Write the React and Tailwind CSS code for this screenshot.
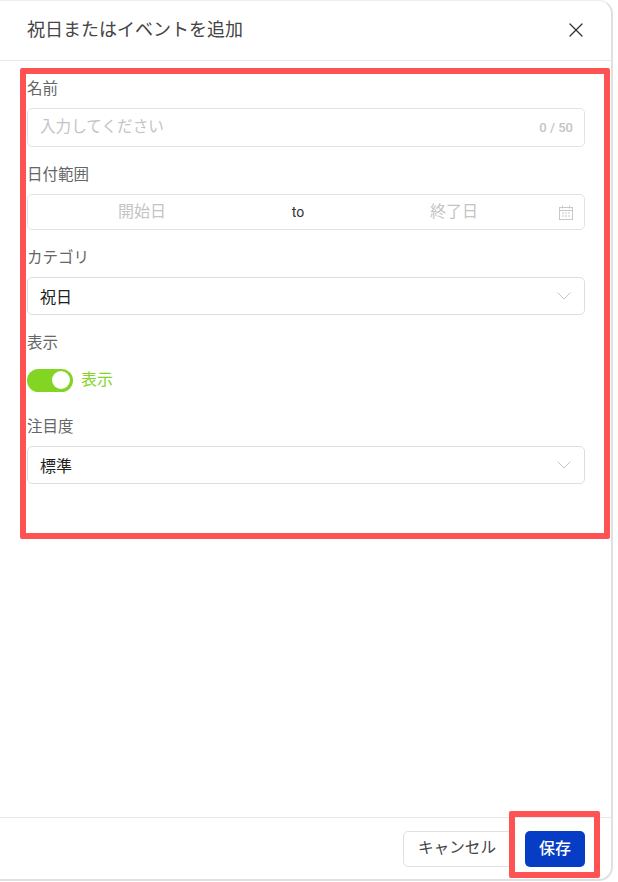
import { X } from "lucide-react";

const font = { fontFamily: '"Roboto", "Noto Sans CJK JP", sans-serif' };

function Label({ children, className = "" }) {
  return <div className={`h-5 text-[15.5px] leading-[22px] text-[#666] ${className}`}>{children}</div>;
}

function CalendarIcon() {
  return (
    <svg width="14" height="15" viewBox="0 0 14 15" fill="none" stroke="#c8c8c8" strokeWidth="1">
      <rect x="0.5" y="2.5" width="13" height="12" />
      <path d="M0.5 5.5h13M3.5 0.5v3M10.5 0.5v3" />
      <path d="M3 8h2M6 8h2M9 8h2M3 11h2M6 11h2M9 11h2" />
    </svg>
  );
}

function Chevron() {
  return (
    <svg width="14" height="8" viewBox="0 0 14 8" fill="none" stroke="#c4c4c4" strokeWidth="1">
      <path d="M0.5 0.5L7 7L13.5 0.5" />
    </svg>
  );
}

function SelectField({ value }) {
  return (
    <div className="flex h-[38px] items-center justify-between rounded-[5px] border border-[#dedede] bg-white pl-3 pr-[13px]">
      <span className="pt-[4px] text-[16px] text-[#222]">{value}</span>
      <Chevron />
    </div>
  );
}

export default function App() {
  return (
    <div className="relative h-[882px] w-[618px] bg-white" style={font}>
      <div className="flex h-[881px] w-[613px] flex-col rounded-tr-[14px] rounded-br-[14px] border-t border-r-2 border-b-2 border-[#e0e0e0] border-t-[#eeeeee]">
        {/* header */}
        <div className="flex h-[60px] items-center justify-between border-b border-[#e8e8e8] pb-[2px] pl-[27px] pr-[23px]">
          <h1 className="text-[18px] font-normal text-[#444]">祝日またはイベントを追加</h1>
          <X size={24} strokeWidth={1.3} color="#333" />
        </div>

        {/* form */}
        <div className="flex-1 pl-[27px] pr-[26px] pt-[17px]">
          <Label>名前</Label>
          <div className="mt-[10px] flex h-[39px] items-center justify-between rounded-[5px] border border-[#e3e3e3] pl-3 pr-[11px]">
            <span className="text-[15.6px] text-[#c4c4c4]">入力してください</span>
            <span className="text-[13px] font-medium text-[#c4c4c4]">0 / 50</span>
          </div>

          <Label className="mt-[17px]">日付範囲</Label>
          <div className="mt-[10px] grid h-[36px] grid-cols-[228px_84px_219px_1fr] items-center rounded-[5px] border border-[#e3e3e3]">
            <span className="text-center text-[16px] text-[#c4c4c4]">開始日</span>
            <span className="text-center text-[14px] text-[#333]">to</span>
            <span className="pl-[9px] text-center text-[16px] text-[#c4c4c4]">終了日</span>
            <span className="flex justify-end pr-[11px]"><CalendarIcon /></span>
          </div>

          <Label className="mt-[17px]">カテゴリ</Label>
          <div className="mt-[10px]"><SelectField value="祝日" /></div>

          <Label className="mt-[17px]">表示</Label>
          <div className="mt-[16px] flex items-center gap-2">
            <div className="flex h-[23px] w-[46px] items-center justify-end rounded-full bg-[#82d523] pr-[3px]">
              <div className="h-[18px] w-[18px] rounded-full bg-white" />
            </div>
            <span className="text-[16px] text-[#82d523]">表示</span>
          </div>

          <Label className="mt-[24px]">注目度</Label>
          <div className="mt-[10px]"><SelectField value="標準" /></div>
        </div>

        {/* footer */}
        <div className="flex h-[62px] items-start justify-end gap-3 border-t border-[#e8e8e8] pr-[26px] pt-[13px]">
          <button className="h-[36px] w-[110px] rounded-[5px] border border-[#e0e0e0] bg-white pr-[2px] text-[15.6px] text-[#444]">キャンセル</button>
          <button className="h-[36px] w-[60px] rounded-[5px] bg-[#063dc4] text-[16px] font-medium text-white">保存</button>
        </div>
      </div>

      {/* annotation boxes drawn over the screenshot */}
      <div className="absolute left-[20px] top-[68px] h-[471px] w-[590px] rounded-[2px] border-[6px] border-[#ff5252]" />
      <div className="absolute left-[509px] top-[811px] h-[67px] w-[91px] rounded-[2px] border-[6px] border-[#ff5252]" />
    </div>
  );
}
